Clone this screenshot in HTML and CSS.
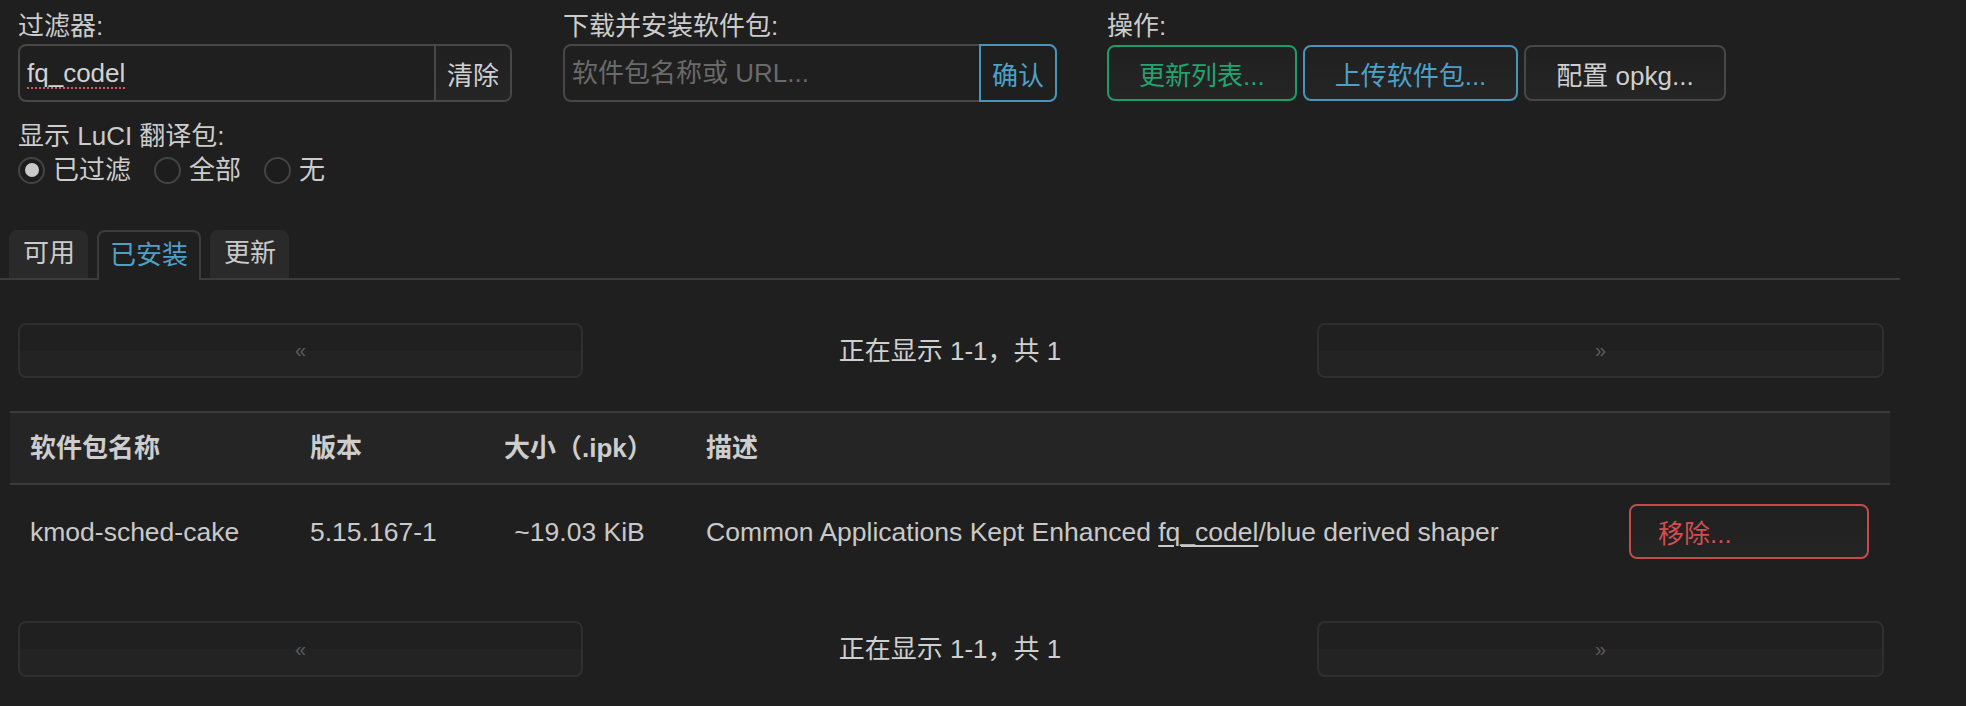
FILE: index.html
```html
<!DOCTYPE html>
<html lang="zh-CN">
<head>
<meta charset="utf-8">
<title>软件包</title>
<link rel="stylesheet" href="styles.css">
</head>
<body>
<div class="page">
  <div class="controls">
    <div class="ctl">
      <div class="lbl">过滤器:</div>
      <div class="igroup">
        <input class="ifield spell" type="text" value="fq_codel">
        <button class="ibtn">清除</button>
      </div>
      <div class="lbl lbl-lang">显示 LuCI 翻译包:</div>
      <div class="radios">
        <label class="radio"><input type="radio" name="i18n" checked><span>已过滤</span></label>
        <label class="radio"><input type="radio" name="i18n"><span>全部</span></label>
        <label class="radio"><input type="radio" name="i18n"><span>无</span></label>
      </div>
    </div>
    <div class="ctl">
      <div class="lbl">下载并安装软件包:</div>
      <div class="igroup">
        <input class="ifield" type="text" placeholder="软件包名称或 URL...">
        <button class="ibtn ibtn-blue">确认</button>
      </div>
    </div>
    <div class="ctl">
      <div class="lbl">操作:</div>
      <div class="actions">
        <button class="btn btn-green">更新列表...</button>
        <button class="btn btn-blue">上传软件包...</button>
        <button class="btn">配置 opkg...</button>
      </div>
    </div>
  </div>

  <div class="tabs">
    <div class="tab">可用</div>
    <div class="tab tab-active">已安装</div>
    <div class="tab">更新</div>
  </div>

  <div class="pager pager-top">
    <button class="pbtn">«</button>
    <div class="pinfo">正在显示 1-1，共 1</div>
    <button class="pbtn">»</button>
  </div>

  <table class="pkgs">
    <colgroup>
      <col class="c1"><col class="c2"><col class="c3"><col class="c4"><col class="c5">
    </colgroup>
    <thead>
      <tr><th>软件包名称</th><th>版本</th><th>大小（.ipk）</th><th>描述</th><th></th></tr>
    </thead>
    <tbody>
      <tr>
        <td>kmod-sched-cake</td>
        <td>5.15.167-1</td>
        <td class="size">&nbsp;~19.03 KiB</td>
        <td>Common Applications Kept Enhanced <span class="hl">fq_codel</span>/blue derived shaper</td>
        <td><button class="btn-remove">移除...</button></td>
      </tr>
    </tbody>
  </table>

  <div class="pager pager-bottom">
    <button class="pbtn">«</button>
    <div class="pinfo">正在显示 1-1，共 1</div>
    <button class="pbtn">»</button>
  </div>
</div>
</body>
</html>
```

FILE: styles.css
```css
* { box-sizing: border-box; }

html, body {
  margin: 0;
  padding: 0;
  background: #1f1f1f;
}

body {
  width: 1966px;
  height: 706px;
  overflow: hidden;
  color: #cccccc;
  font-family: "Liberation Sans", Arial, "Noto Sans CJK SC", sans-serif;
  font-size: 26px;
  line-height: 32px;
}

button, input {
  font-family: inherit;
  font-size: 26px;
  color: inherit;
}

.page {
  width: 1900px;
}

/* ---------- top controls ---------- */
.controls {
  display: grid;
  grid-template-columns: 545px 544px auto;
  padding: 10px 0 0 18px;
}

.lbl {
  height: 32px;
  line-height: 32px;
  margin-bottom: 2px;
  white-space: nowrap;
}

.lbl-lang {
  margin-top: 18px;
  margin-bottom: 0;
}

.igroup {
  display: flex;
  width: 494px;
  height: 58px;
  border: 2px solid #474747;
  border-radius: 8px;
  background: #1f1f1f;
}

.ifield {
  flex: 1;
  min-width: 0;
  height: 100%;
  border: 0;
  background: transparent;
  outline: none;
  padding: 0 0 0 7px;
  color: #d2d2d2;
}

.ifield::placeholder {
  color: #6a6a6a;
}

.spell {
  text-decoration: underline dotted #d25a5a;
  text-decoration-thickness: 2px;
  text-underline-offset: 6px;
}

.ibtn {
  width: 76px;
  height: 54px;
  border: 0;
  border-left: 2px solid #474747;
  border-radius: 0 6px 6px 0;
  background: linear-gradient(#202020, #252525);
  color: #d0d0d0;
  padding: 0;
}

.ibtn-blue {
  width: 78px;
  height: 58px;
  margin: -2px -2px -2px 0;
  border: 2px solid #4795bb;
  border-radius: 0 8px 8px 0;
  color: #4da1c7;
  background: #1f1f1f;
}

.radios {
  display: flex;
  align-items: center;
  height: 32px;
  margin-top: 2px;
}

.radio {
  display: flex;
  align-items: center;
  margin-right: 23px;
}

.radio input {
  appearance: none;
  -webkit-appearance: none;
  width: 27px;
  height: 27px;
  margin: 0 8px 0 0;
  border: 2px solid #444444;
  border-radius: 50%;
  background: #1d1d1d;
  position: relative;
}

.radio input:checked::after {
  content: "";
  position: absolute;
  left: 4.5px;
  top: 4.5px;
  width: 14px;
  height: 14px;
  border-radius: 50%;
  background: #c9c9c9;
}

.actions {
  display: flex;
  gap: 6px;
  padding-top: 1px;
}

.btn {
  height: 56px;
  padding: 0 30px;
  border: 2px solid #474747;
  border-radius: 8px;
  background: linear-gradient(#202020, #252525);
  color: #cfcfcf;
  white-space: nowrap;
}

.btn-green {
  border-color: #1d9c69;
  color: #22a46f;
}

.btn-blue {
  border-color: #4795bb;
  color: #4da1c7;
}

/* ---------- tabs ---------- */
.tabs {
  display: flex;
  align-items: flex-end;
  gap: 9px;
  margin-top: 44px;
  padding-left: 9px;
  height: 50px;
  border-bottom: 2px solid #3c3c3c;
}

.tab {
  height: 48px;
  line-height: 46px;
  padding: 0 13px 0 14px;
  border-radius: 8px 8px 0 0;
  background: #2a2a2a;
  color: #cbcbcb;
  white-space: nowrap;
}

.tab-active {
  height: 50px;
  margin-bottom: -2px;
  padding: 0 11px;
  border: 2px solid #3c3c3c;
  border-bottom: 0;
  background: #1f1f1f;
  color: #4da1c7;
}

/* ---------- pager ---------- */
.pager {
  display: grid;
  grid-template-columns: 565px 1fr 567px;
  align-items: center;
  margin-left: 18px;
  width: 1866px;
}

.pager-top { margin-top: 43px; height: 55px; }
.pager-bottom { margin-top: 43px; height: 56px; }

.pbtn {
  height: 100%;
  border: 2px solid #2f2f2f;
  border-radius: 8px;
  background: linear-gradient(#202020 50%, #232323 50%);
  color: #5c5c5c;
  font-size: 20px;
  padding: 0;
}

.pinfo {
  text-align: center;
  color: #cfcfcf;
  white-space: nowrap;
}

/* ---------- table ---------- */
.pkgs {
  margin: 33px 0 0 10px;
  width: 1880px;
  table-layout: fixed;
  border-collapse: collapse;
}

.c1 { width: 280px; }
.c2 { width: 194px; }
.c3 { width: 202px; }
.c4 { width: 923px; }
.c5 { width: 281px; }

.pkgs thead tr {
  background: #252525;
  border-top: 2px solid #3b3b3b;
  border-bottom: 2px solid #3b3b3b;
}

.pkgs th {
  height: 72px;
  padding: 0 20px;
  text-align: left;
  font-weight: bold;
  color: #cdcdcd;
  white-space: nowrap;
}

.pkgs td {
  height: 94px;
  padding: 0 20px;
  color: #c9c9c9;
  font-size: 26.5px;
  white-space: nowrap;
  vertical-align: middle;
}

.pkgs td.size {
  padding-left: 23px;
}

.hl {
  text-decoration: underline;
  text-decoration-thickness: 2px;
  text-underline-offset: 4px;
}

.btn-remove {
  display: block;
  width: 240px;
  height: 55px;
  padding: 0 0 0 27px;
  text-align: left;
  border: 2px solid #c54a4b;
  border-radius: 8px;
  background: linear-gradient(#202020, #242424);
  color: #d24e4f;
}
```
